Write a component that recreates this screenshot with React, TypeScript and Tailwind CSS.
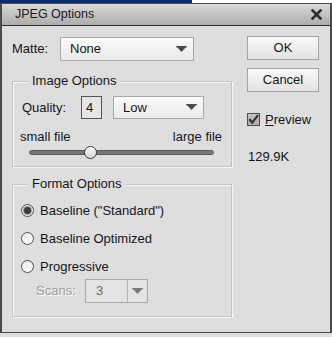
import React from 'react';

// small downward triangle used by the combo boxes
function Arrow({ color = '#4a4a4a' }: { color?: string }) {
  return (
    <svg width="11" height="7" viewBox="0 0 11 7">
      <polygon points="0,0 11,0 5.5,6" fill={color} />
      <rect x="0" y="0" width="11" height="1.5" fill={color} opacity="0.6" />
    </svg>
  );
}

function Combo({ value, className }: { value: string; className: string }) {
  return (
    <div
      className={`flex items-center justify-between border border-[#a9a9a9] bg-gradient-to-b from-[#fbfbfb] to-[#e9e9e9] pl-[9px] pr-[6px] ${className}`}
    >
      <span>{value}</span>
      <Arrow />
    </div>
  );
}

function Radio({ checked }: { checked?: boolean }) {
  return (
    <div className="w-[13px] h-[13px] rounded-full border border-[#4f4f4f] bg-gradient-to-b from-[#ececec] to-[#fafafa] flex items-center justify-center">
      {checked && <div className="w-[7px] h-[7px] rounded-full bg-[#3e3e3e] ring-1 ring-[#9a9a9a]" />}
    </div>
  );
}

function Group({ title, className, children }: { title: string; className: string; children: React.ReactNode }) {
  return (
    <div className={`relative border border-[#c3c3c3] shadow-[inset_1px_1px_0_#f7f7f7,1px_1px_0_#f7f7f7] ${className}`}>
      <span className="absolute -top-[9px] left-[15px] px-[4px] bg-[#dedede] leading-[16px]">{title}</span>
      {children}
    </div>
  );
}

export default function App() {
  return (
    <div className="w-[332px] h-[337px] bg-[#dedede] text-[13px] text-[#151520] font-['Liberation_Sans',Arial,sans-serif] overflow-hidden">
      <div className="flex h-[3px]">
        <div className="w-[192px] bg-[#0c2b68]" />
        <div className="flex-1 bg-white" />
      </div>
      <div className="h-[330px] border-t border-b border-l-2 border-r-2 border-[#4a4a4a] flex flex-col">
        {/* title bar */}
        <div className="h-[22px] border-b border-[#2f2f2f] bg-gradient-to-b from-[#d9d9d9] to-[#adadad] flex items-center justify-between pl-[13px] pr-[8px]">
          <span className="text-[12.5px] text-[#1a1a1a]">JPEG Options</span>
          <svg width="11" height="11" viewBox="0 0 11 11">
            <path d="M1.5 1.5 L9.5 9.5 M9.5 1.5 L1.5 9.5" stroke="#2e2e2e" strokeWidth="2.6" strokeLinecap="square" />
          </svg>
        </div>

        <div className="flex-1 flex pl-[10px]">
          {/* left column */}
          <div className="w-[220px] flex flex-col">
            <div className="mt-[11px] h-[24px] flex items-center">
              <span className="w-[48px]">Matte:</span>
              <Combo value="None" className="w-[134px] h-[24px]" />
            </div>

            <Group title="Image Options" className="mt-[20px] h-[86px]">
              <div className="mt-[14px] flex items-center pl-[9px]">
                <span className="w-[59px]">Quality:</span>
                <div className="w-[21px] h-[23px] border border-[#555] bg-[#e6e6e6] pl-[4px] leading-[21px]">4</div>
                <Combo value="Low" className="ml-[11px] w-[91px] h-[23px]" />
              </div>
              <div className="mt-[10px] flex justify-between pl-[7px] pr-[9px] leading-[16px]">
                <span>small file</span>
                <span>large file</span>
              </div>
              <div className="relative mt-[1px] h-[13px] ml-[16px] w-[185px] flex items-center">
                <div className="w-full h-[5px] rounded-full bg-[#777] border border-[#5b5b5b]" />
                <div className="absolute left-[55px] top-0 w-[13px] h-[13px] rounded-full border border-[#3a3a3a] bg-gradient-to-b from-[#fdfdfd] to-[#d5d5d5]" />
              </div>
            </Group>

            <Group title="Format Options" className="mt-[17px] h-[133px]">
              <div className="mt-[19px] flex flex-col gap-[15px] pl-[8px]">
                <div className="flex items-center gap-[6px] h-[13px]">
                  <Radio checked />
                  <span>Baseline (&quot;Standard&quot;)</span>
                </div>
                <div className="flex items-center gap-[6px] h-[13px]">
                  <Radio />
                  <span>Baseline Optimized</span>
                </div>
                <div className="flex items-center gap-[6px] h-[13px]">
                  <Radio />
                  <span>Progressive</span>
                </div>
              </div>
              <div className="mt-[6px] flex items-center pl-[23px]">
                <span className="w-[49px] text-[#9c9c9c] [text-shadow:1px_1px_0_#ffffff]">Scans:</span>
                <div className="w-[63px] h-[24px] border border-[#a9a9a9] bg-[#e3e3e3] flex items-center text-[#6e6e6e]">
                  <span className="w-[41px] pl-[10px]">3</span>
                  <div className="w-px h-[22px] bg-[#b5b5b5]" />
                  <div className="flex-1 flex justify-center">
                    <Arrow color="#7a7a7a" />
                  </div>
                </div>
              </div>
            </Group>
          </div>

          {/* right column */}
          <div className="ml-[15px] w-[72px] flex flex-col">
            <button className="mt-[10px] h-[24px] border border-[#a3a3a3] bg-gradient-to-b from-[#f9f9f9] to-[#e3e3e3]">OK</button>
            <button className="mt-[8px] h-[24px] border border-[#a3a3a3] bg-gradient-to-b from-[#f9f9f9] to-[#e3e3e3]">Cancel</button>
            <div className="mt-[18px] flex items-center gap-[5px]">
              <div className="w-[13px] h-[13px] border border-[#4f4f4f] bg-gradient-to-b from-[#c4c4c4] to-[#a9a9a9] flex items-center justify-center">
                <svg width="11" height="11" viewBox="0 0 11 11">
                  <path d="M1.2 5.2 L4.3 8.6 L10 1.2" fill="none" stroke="#333" strokeWidth="2.2" />
                </svg>
              </div>
              <span>
                <span className="underline">P</span>review
              </span>
            </div>
            <span className="mt-[17px] pl-[1px]">129.9K</span>
          </div>
        </div>
      </div>
    </div>
  );
}
